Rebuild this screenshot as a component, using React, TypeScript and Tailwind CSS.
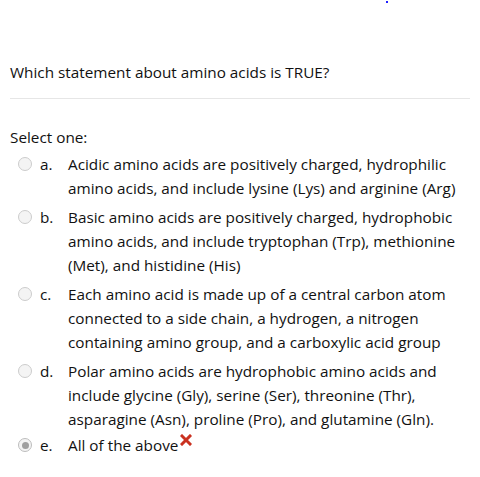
import React from "react";

const options = [
  { l: "a.", t: "Acidic amino acids are positively charged, hydrophilic amino acids, and include lysine (Lys) and arginine (Arg)" },
  { l: "b.", t: "Basic amino acids are positively charged, hydrophobic amino acids, and include tryptophan (Trp), methionine (Met), and histidine (His)" },
  { l: "c.", t: "Each amino acid is made up of a central carbon atom connected to a side chain, a hydrogen, a nitrogen containing amino group, and a carboxylic acid group" },
  { l: "d.", t: "Polar amino acids are hydrophobic amino acids and include glycine (Gly), serine (Ser), threonine (Thr), asparagine (Asn), proline (Pro), and glutamine (Gln)." },
];

function Radio({ checked }: { checked?: boolean }) {
  return (
    <span className={`mt-[5px] flex h-[14px] w-[14px] shrink-0 items-center justify-center rounded-full border bg-[#f4f4f4] ${checked ? "border-[#bdbdbd]" : "border-[#cccccc]"}`}>
      {checked && <span className="h-[7px] w-[7px] rounded-full bg-[#a0a0a0]" />}
    </span>
  );
}

export default function App() {
  return (
    <div className="relative h-[477px] w-[480px] bg-white px-[10px] text-[15.3px] leading-[24px] text-[#111111]" style={{ fontFamily: '"Open Sans", sans-serif' }}>
      <span className="absolute left-[386px] top-[1px] h-[2px] w-[2px] bg-[#2020ff]" />
      <div className="pt-[60px]">Which statement about amino acids is TRUE?</div>
      <div className="mt-[14px] h-px bg-[#e6e6e6]" />
      <div className="mt-[26px]">Select one:</div>
      <div className="mt-[3px] flex flex-col gap-[5px]">
        {options.map((o) => (
          <div key={o.l} className="flex pl-[8px]">
            <Radio />
            <span className="ml-[8px] w-[28px] shrink-0">{o.l}</span>
            <span className="w-[395px]">{o.t}</span>
          </div>
        ))}
        <div className="-mt-[3px] flex pl-[8px]">
          <Radio checked />
          <span className="ml-[8px] w-[28px] shrink-0">e.</span>
          <span className="flex items-start">
            All of the above
            <svg width="12" height="12" viewBox="0 0 12 12" className="ml-[2px] mt-[1px]">
              <path d="M2 2 L10 10 M10 2 L2 10" stroke="#ca3120" strokeWidth="3" strokeLinecap="square" />
            </svg>
          </span>
        </div>
      </div>
    </div>
  );
}
